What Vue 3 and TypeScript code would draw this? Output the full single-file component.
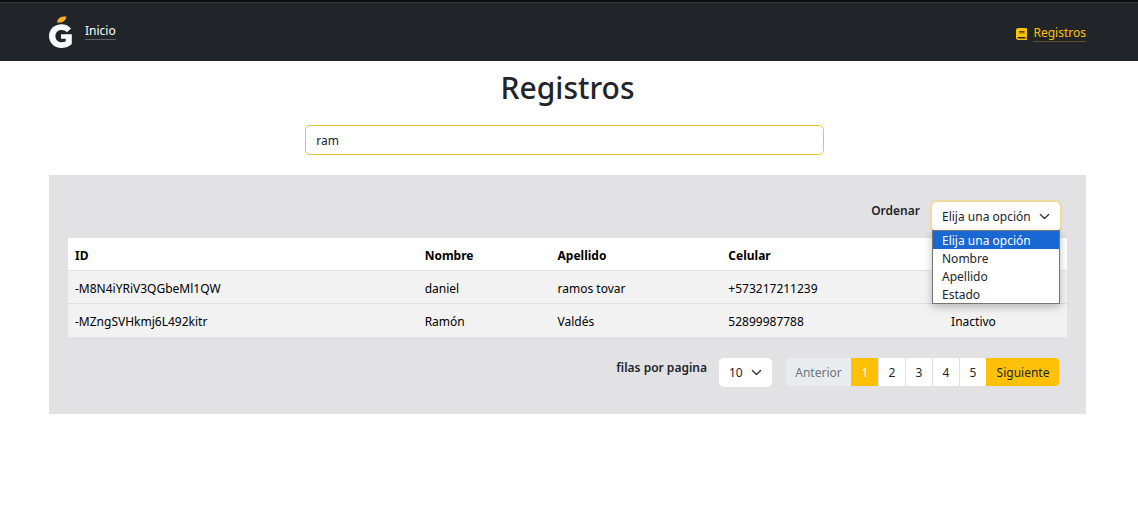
<script setup lang="ts">
import { ref } from 'vue'

interface Registro {
  id: string
  nombre: string
  apellido: string
  celular: string
  estado: string
}

const busqueda = ref('ram')
const orden = ref('Elija una opción')
const opciones: string[] = ['Elija una opción', 'Nombre', 'Apellido', 'Estado']
const menuAbierto = ref(true)
const filas = ref('10')
const pagina = ref(1)
const paginas: number[] = [1, 2, 3, 4, 5]

const registros: Registro[] = [
  { id: '-M8N4iYRiV3QGbeMl1QW', nombre: 'daniel', apellido: 'ramos tovar', celular: '+573217211239', estado: '' },
  { id: '-MZngSVHkmj6L492kitr', nombre: 'Ramón', apellido: 'Valdés', celular: '52899987788', estado: 'Inactivo' },
]

function elegir(opcion: string): void {
  orden.value = opcion
  menuAbierto.value = false
}
</script>

<template>
  <div class="page">
    <header class="navbar">
      <nav class="nav-left">
        <a class="brand" href="#" aria-label="G">
          <svg width="24" height="34" viewBox="0 0 24 34" aria-hidden="true">
            <path d="M8 6.500C8.500 2 11.500 .2 17.500 .4C16.500 4.800 14 7 8 6.500Z" fill="#f9ae22" />
            <path d="M22 12.500L18 16.300C16.500 14.600 14.600 13.900 12.500 13.900C8.800 13.900 6.400 16.600 6.400 20C6.400 23.600 8.900 26.300 12.600 26.300C14.200 26.300 15.600 25.900 16.800 25.200V22.800H12V18.200H22.800V28C20 30.600 16.500 32 12.400 32C5.200 32 0 27 0 20.100C0 13.200 5.300 8.200 12.500 8.200C16.500 8.200 19.800 9.700 22 12.500Z" fill="#f8f9fa" />
          </svg>
        </a>
        <a class="link" href="#">Inicio</a>
      </nav>
      <a class="registros" href="#">
        <svg width="11" height="12" viewBox="0 0 448 512" preserveAspectRatio="none" aria-hidden="true">
          <path fill="#ffc107" d="M448 360V50c0-28-22-50-50-50H96C43 0 0 43 0 96v320c0 53 43 96 96 96h328c13.300 0 24-10.700 24-24v-16c0-7.500-3.500-14.300-8.900-18.700-4.200-15.400-4.200-59.300 0-74.700 5.400-4.300 8.900-11.100 8.900-18.600zM128 134c0-3.300 2.700-6 6-6h212c3.300 0 6 2.700 6 6v20c0 3.300-2.700 6-6 6H134c-3.300 0-6-2.700-6-6zm0 64c0-3.300 2.700-6 6-6h212c3.300 0 6 2.700 6 6v20c0 3.300-2.700 6-6 6H134c-3.300 0-6-2.700-6-6zm253.400 250H96c-17.700 0-32-14.300-32-32 0-17.600 14.400-32 32-32h285.400c-1.900 17.100-1.900 46.900 0 64z" />
        </svg>
        <span class="link">Registros</span>
      </a>
    </header>

    <main class="content">
      <h1>Registros</h1>
      <input v-model="busqueda" class="search" type="text" aria-label="Buscar" />

      <section class="panel">
        <div class="toolbar">
          <label for="orden">Ordenar</label>
          <div class="select-wrap sort">
            <select id="orden" v-model="orden" @mousedown.prevent="menuAbierto = !menuAbierto">
              <option v-for="o in opciones" :key="o">{{ o }}</option>
            </select>
            <svg class="chevron" width="11" height="11" viewBox="0 0 16 16" aria-hidden="true">
              <path d="m2 5 6 6 6-6" />
            </svg>
            <ul v-if="menuAbierto" class="menu" role="listbox" aria-label="Ordenar">
              <li
                v-for="o in opciones"
                :key="o"
                role="option"
                :aria-selected="o === orden"
                :class="{ active: o === orden }"
                @click="elegir(o)"
              >{{ o }}</li>
            </ul>
          </div>
        </div>

        <table>
          <thead>
            <tr>
              <th class="c-id">ID</th>
              <th class="c-nombre">Nombre</th>
              <th class="c-apellido">Apellido</th>
              <th class="c-celular">Celular</th>
              <th aria-label="Estado"></th>
            </tr>
          </thead>
          <tbody>
            <tr v-for="r in registros" :key="r.id">
              <td>{{ r.id }}</td>
              <td>{{ r.nombre }}</td>
              <td>{{ r.apellido }}</td>
              <td>{{ r.celular }}</td>
              <td>{{ r.estado }}</td>
            </tr>
          </tbody>
        </table>

        <div class="footer">
          <label for="filas">filas por pagina</label>
          <div class="select-wrap rows">
            <select id="filas" v-model="filas">
              <option>10</option>
              <option>25</option>
              <option>50</option>
            </select>
            <svg class="chevron" width="11" height="11" viewBox="0 0 16 16" aria-hidden="true">
              <path d="m2 5 6 6 6-6" />
            </svg>
          </div>
          <nav class="pagination" aria-label="Paginación">
            <button class="prev" type="button" disabled>Anterior</button>
            <button
              v-for="p in paginas"
              :key="p"
              type="button"
              class="num"
              :class="{ current: p === pagina }"
              @click="pagina = p"
            >{{ p }}</button>
            <button class="next" type="button">Siguiente</button>
          </nav>
        </div>
      </section>
    </main>
  </div>
</template>

<style>
body {
  margin: 0;
  background: #fff;
}
</style>

<style scoped>
.page,
.page input,
.page select,
.page button {
  font-family: "Segoe UI", "Noto Sans", "Open Sans", sans-serif;
  font-size: 12px;
  line-height: 18px;
  color: #212529;
}

.page * {
  box-sizing: border-box;
}

.navbar {
  display: flex;
  align-items: center;
  justify-content: space-between;
  height: 61px;
  padding: 2px 52px 0 49px;
  background: #212529;
  border-top: 2px solid #0c0f10;
  box-shadow: inset 0 1px #343a3d;
}

.nav-left {
  display: flex;
  align-items: center;
  gap: 12px;
}

.nav-left .link {
  margin-bottom: 2px;
}

.brand {
  display: flex;
}

a {
  color: #fff;
  text-decoration: none;
}

.link {
  line-height: 16px;
  border-bottom: 1px solid #5d6367;
}

.registros {
  display: flex;
  align-items: center;
  gap: 6px;
  padding-top: 2px;
  color: #ffc107;
}

.registros .link {
  border-bottom-color: #5a5420;
}

.content {
  display: flex;
  flex-direction: column;
  padding: 7px 52px 0 49px;
}

h1 {
  margin: 0 0 18px;
  font-size: 30px;
  line-height: 39px;
  font-weight: 500;
  text-align: center;
}

.search {
  align-self: center;
  width: 50%;
  height: 30px;
  margin-right: 6px;
  padding: 0 10px;
  background: #fff;
  border: 1px solid #e6c52f;
  border-radius: 5px;
  outline: none;
}

.panel {
  margin-top: 20px;
  padding: 27px 19px 27px;
  background: #e2e2e4;
}

.toolbar,
.footer {
  display: flex;
  justify-content: flex-end;
  gap: 12px;
  font-weight: 600;
}

.toolbar {
  padding-right: 7px;
  margin-bottom: 7px;
}

.select-wrap {
  position: relative;
}

.select-wrap select {
  display: block;
  width: 100%;
  height: 29px;
  padding: 0 10px;
  appearance: none;
  background: #fff;
  border: 0;
  border-radius: 5px;
  outline: none;
}

.sort {
  width: 128px;
}

.sort select {
  box-shadow: 0 0 0 2px #f1d9a0;
}

.rows {
  width: 53px;
}

.chevron {
  position: absolute;
  top: 9px;
  right: 10px;
  fill: none;
  stroke: #343a40;
  stroke-width: 2;
  stroke-linecap: round;
  stroke-linejoin: round;
  pointer-events: none;
}

.menu {
  position: absolute;
  top: 28px;
  left: 0;
  right: 0;
  z-index: 2;
  margin: 0;
  padding: 0;
  list-style: none;
  font-weight: 400;
  background: #fff;
  border: 1px solid #767676;
  box-shadow: 0 3px 8px rgba(0, 0, 0, 0.25);
}

.menu li {
  height: 18px;
  padding: 0 9px;
  line-height: 20px;
}

.menu .active {
  color: #fff;
  background: #1967d2;
}

table {
  width: 100%;
  table-layout: fixed;
  border-collapse: separate;
  border-spacing: 0;
  color: #000;
}

th,
td {
  height: 33px;
  padding: 3px 7px 0;
  text-align: left;
  background: #f2f2f2;
}

th {
  background: #fff;
  border-bottom: 1px solid #dee2e6;
}

tbody tr:first-child td {
  border-bottom: 1px solid #dfe0e1;
}

.c-id {
  width: 35%;
}

.c-nombre {
  width: 13.300%;
}

.c-apellido {
  width: 17.100%;
}

.c-celular {
  width: 22.300%;
}

.footer {
  margin-top: 21px;
  padding-right: 8px;
}

.footer label {
  padding-top: 1px;
}

.pagination {
  display: flex;
  height: 28px;
  margin-left: 1px;
}

.pagination button {
  margin: 0;
  padding: 1px 0 0;
  border: 0;
  border-left: 1px solid #dee2e6;
  background: #fff;
}

.pagination .num {
  width: 27px;
}

.pagination .current {
  color: #fff;
  background: #ffc107;
  border-left-color: #ffc107;
}

.pagination .prev {
  width: 66px;
  color: #6c757d;
  background: #e9ecef;
  border-radius: 4px 0 0 4px;
}

.pagination .next {
  width: 73px;
  background: #ffc107;
  border-left-color: #ffc107;
  border-radius: 0 4px 4px 0;
}
</style>
